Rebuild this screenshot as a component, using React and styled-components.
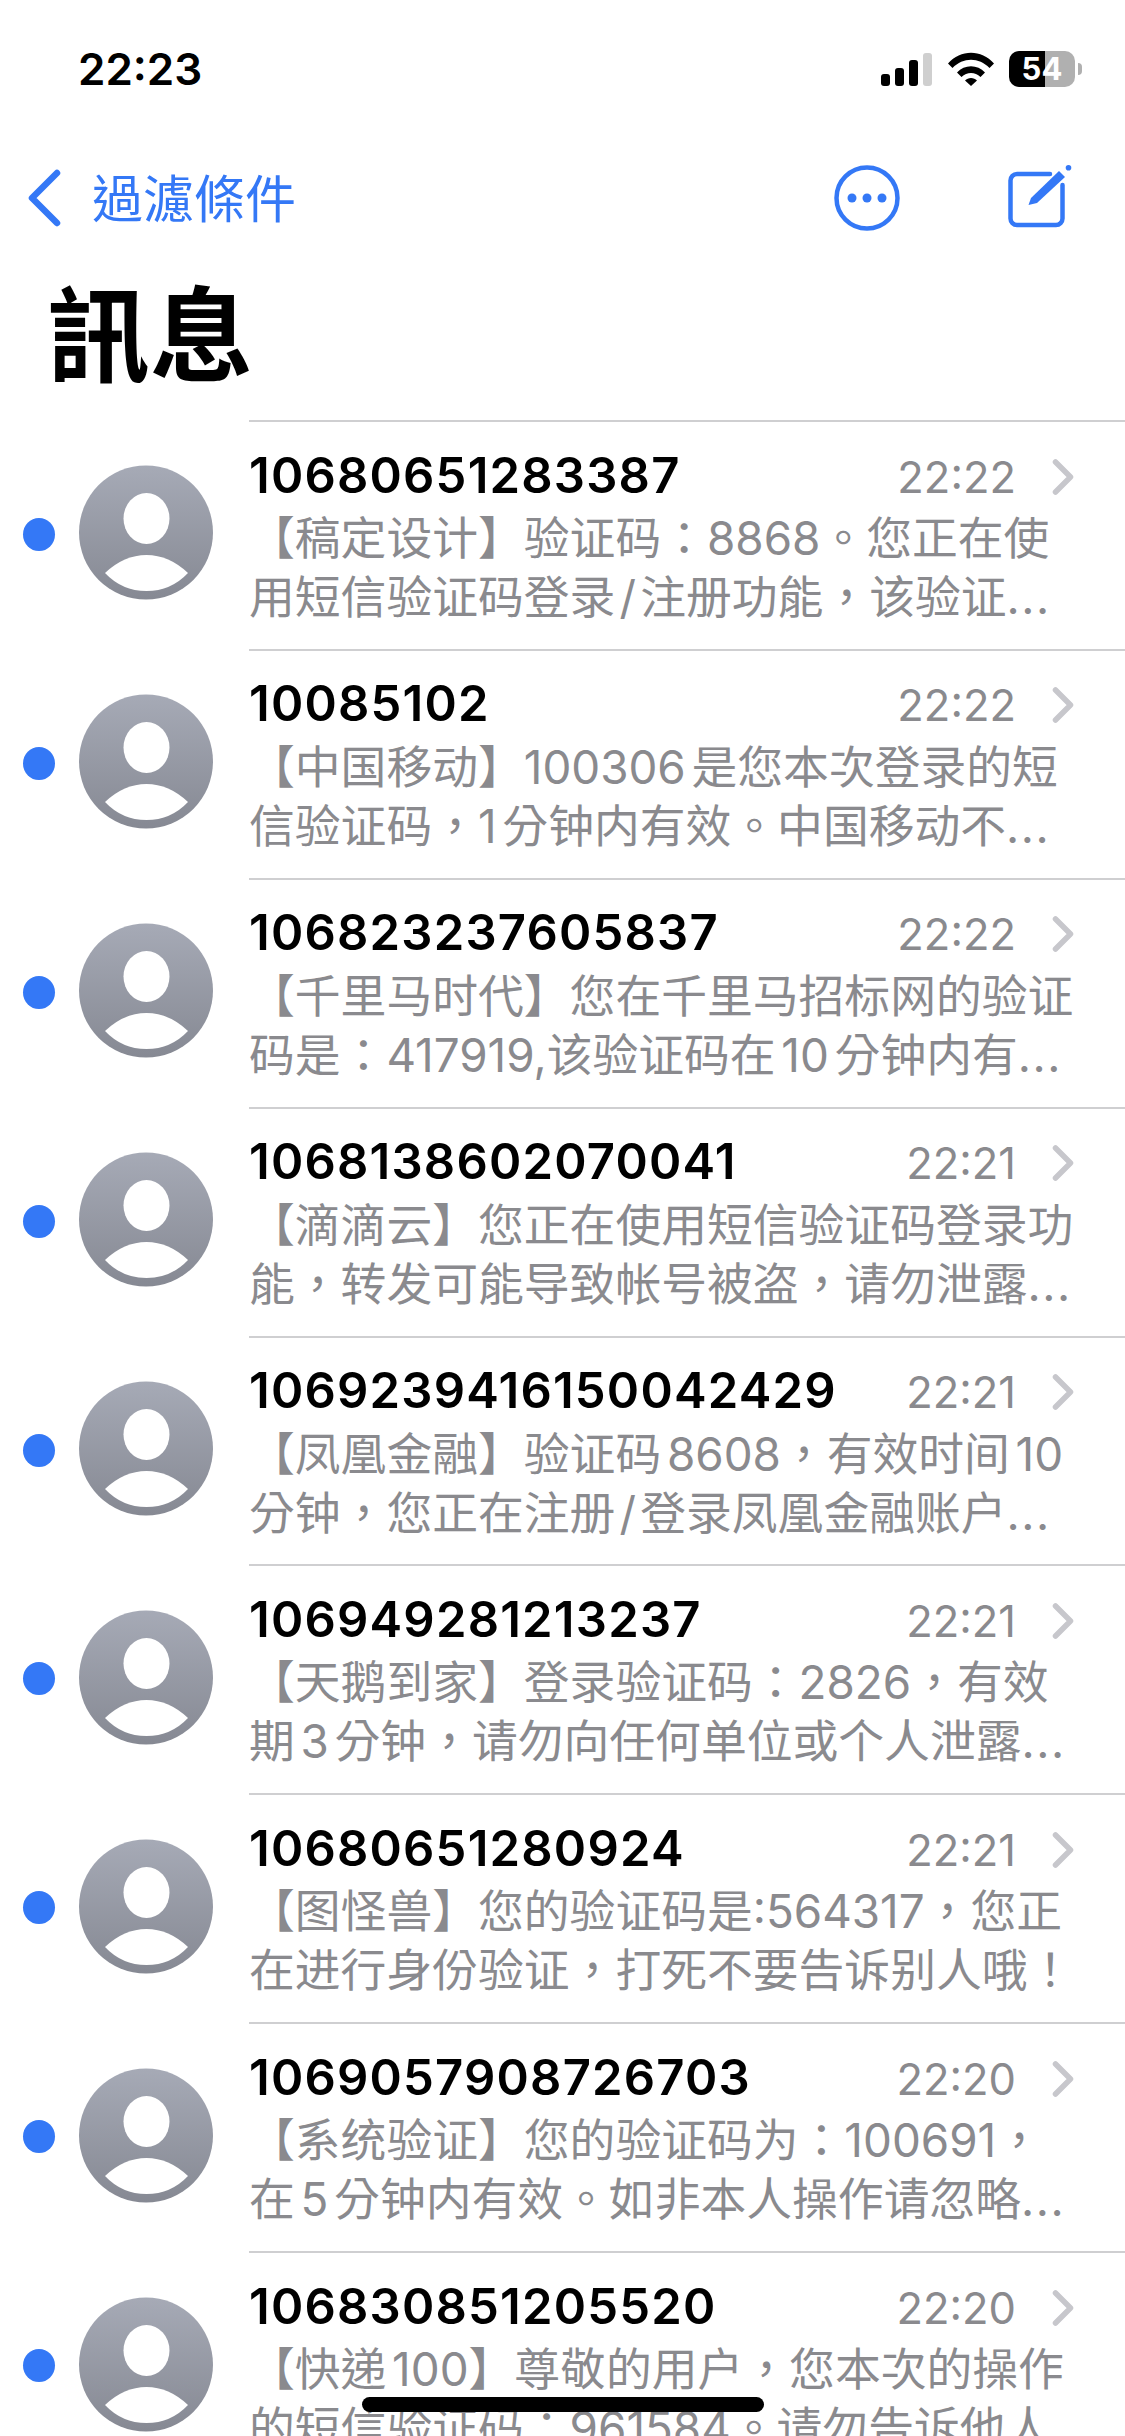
import React from "react";
import styled, { createGlobalStyle } from "styled-components";

const GlobalStyle = createGlobalStyle`
  html, body {
    margin: 0;
    padding: 0;
    background: #fff;
  }
`;

const Screen = styled.div`
  position: relative;
  width: 1125px;
  height: 2436px;
  overflow: hidden;
  background: #fff;
  font-family: Inter, "Noto Sans CJK TC", sans-serif;
`;

const StatusBar = styled.div`
  height: 138px;
  display: flex;
  align-items: center;
  justify-content: space-between;
  padding: 0 43px 0 78px;
`;

const Clock = styled.div`
  font-size: 44px;
  font-weight: 600;
  color: #000;
`;

const StatusIcons = styled.div`
  display: flex;
  align-items: center;
  gap: 15px;
`;

const Battery = styled.div`
  position: relative;
  width: 66px;
  height: 36px;
  border-radius: 10px;
  overflow: hidden;
  background: linear-gradient(90deg, #000 54%, #b0b0b0 54%);
  color: #fff;
  font-size: 31px;
  font-weight: 700;
  line-height: 36px;
  text-align: center;
`;

const BatteryWrap = styled.div`
  display: flex;
  align-items: center;
  gap: 3px;
`;

const BatteryNub = styled.div`
  width: 4px;
  height: 12px;
  background: #b0b0b0;
  border-radius: 0 4px 4px 0;
`;

const NavBar = styled.div`
  height: 120px;
  display: flex;
  align-items: center;
  justify-content: space-between;
  padding: 0 52.5px 0 27px;
`;

const BackLink = styled.div`
  display: flex;
  align-items: center;
  gap: 30px;
  color: #3478f6;
  font-family: "Noto Sans CJK TC", sans-serif;
  font-size: 51px;
`;

const BackLabel = styled.span`
  padding-bottom: 5px;
`;

const NavActions = styled.div`
  display: flex;
  align-items: center;
  gap: 106.5px;
`;

const PageTitle = styled.h1`
  margin: 0;
  height: 162px;
  padding: 0 0 0 47px;
  box-sizing: border-box;
  font-family: "Noto Sans CJK TC", sans-serif;
  font-size: 103px;
  font-weight: 700;
  line-height: 143px;
  color: #000;
`;

const Row = styled.div`
  height: 228.9px;
  display: flex;
`;

const Lead = styled.div`
  width: 249px;
  flex: none;
  display: flex;
  align-items: center;
  padding: 0 0 0 23px;
  box-sizing: border-box;
  gap: 24px;
`;

const UnreadDot = styled.div`
  width: 32px;
  height: 33px;
  border-radius: 50%;
  background: #3478f6;
  flex: none;
`;

const AvatarSvg = styled.svg`
  margin-bottom: 3px;
  flex: none;
`;

const Body = styled.div`
  flex: 1;
  min-width: 0;
  border-top: 2px solid #cfcfd1;
  padding-top: 25px;
  box-sizing: border-box;
`;

const Header = styled.div`
  height: 56px;
  display: flex;
  align-items: center;
  justify-content: space-between;
  padding-right: 51px;
`;

const Sender = styled.div`
  font-size: 49px;
  font-weight: 600;
  color: #000;
  letter-spacing: 1.2px;
`;

const Meta = styled.div`
  display: flex;
  align-items: center;
  gap: 36px;
  margin-top: 3px;
  color: #8a8a8e;
  font-size: 43.5px;
`;

const Preview = styled.div`
  margin-top: 6px;
  color: #8a8a8e;
  font-family: Inter, "Noto Sans CJK TC", sans-serif;
  font-size: 45.8px;
  line-height: 59px;
`;

const PreviewLine = styled.div`
  white-space: nowrap;
  text-autospace: normal;
`;

const Ellipsis = styled.span`
  letter-spacing: 1.5px;
`;

const HomeIndicator = styled.div`
  position: absolute;
  left: 362px;
  bottom: 24px;
  width: 402px;
  height: 15px;
  border-radius: 8px;
  background: #000;
`;

const messages = [
  { sender: "10680651283387", time: "22:22", first: "【稿定设计】验证码：8868。您正在使", second: "用短信验证码登录\u200a/\u200a注册功能，该验证", clipped: true },
  { sender: "10085102", time: "22:22", first: "【中国移动】100306是您本次登录的短", second: "信验证码，1分钟内有效。中国移动不", clipped: true },
  { sender: "106823237605837", time: "22:22", first: "【千里马时代】您在千里马招标网的验证", second: "码是：417919,该验证码在10分钟内有", clipped: true },
  { sender: "1068138602070041", time: "22:21", first: "【滴滴云】您正在使用短信验证码登录功", second: "能，转发可能导致帐号被盗，请勿泄露", clipped: true },
  { sender: "1069239416150042429", time: "22:21", first: "【凤凰金融】验证码8608，有效时间10", second: "分钟，您正在注册\u200a/\u200a登录凤凰金融账户", clipped: true },
  { sender: "106949281213237", time: "22:21", first: "【天鹅到家】登录验证码：2826，有效", second: "期3分钟，请勿向任何单位或个人泄露", clipped: true },
  { sender: "10680651280924", time: "22:21", first: "【图怪兽】您的验证码是:564317，您正", second: "在进行身份验证，打死不要告诉别人哦！" },
  { sender: "1069057908726703", time: "22:20", first: "【系统验证】您的验证码为：100691，", second: "在5分钟内有效。如非本人操作请忽略", clipped: true },
  { sender: "106830851205520", time: "22:20", first: "【快递100】尊敬的用户，您本次的操作", second: "的短信验证码：961584。请勿告诉他人" },
];

const SignalIcon = () => (
  <svg width="52" height="33" viewBox="0 0 52 33">
    <rect x="0" y="21" width="9" height="12" rx="3" fill="#000" />
    <rect x="14" y="15" width="9" height="18" rx="3" fill="#000" />
    <rect x="28" y="7" width="9" height="26" rx="3" fill="#000" />
    <rect x="42" y="0" width="9" height="33" rx="3" fill="#cfcfcf" />
  </svg>
);

const WifiIcon = () => (
  <svg width="46" height="34" viewBox="0 0 46 34">
    <path d="M0 11.5C12.5 -3 33.5 -3 46 11.5L41.5 16C31 5 15 5 4.500 16Z" fill="#000" />
    <path d="M9 20.500C16.500 12 29.500 12 37 20.500L32.500 25C27 19.500 19 19.500 13.500 25Z" fill="#000" />
    <path d="M17 28.500C20 25 26 25 29 28.500L23 34Z" fill="#000" />
  </svg>
);

const BackIcon = () => (
  <svg width="35" height="58" viewBox="0 0 35 58">
    <path d="M30 4L5 29L30 54" fill="none" stroke="#3478f6" strokeWidth="6.500" strokeLinecap="round" strokeLinejoin="round" />
  </svg>
);

const MoreIcon = () => (
  <svg width="66" height="66" viewBox="0 0 66 66">
    <circle cx="33" cy="33" r="30.500" fill="none" stroke="#3478f6" strokeWidth="4.500" />
    <circle cx="18" cy="33" r="4.500" fill="#3478f6" />
    <circle cx="33" cy="33" r="4.500" fill="#3478f6" />
    <circle cx="48" cy="33" r="4.500" fill="#3478f6" />
  </svg>
);

const ComposeIcon = () => (
  <svg width="66" height="66" viewBox="0 0 66 66">
    <path d="M43 9H10A6.500 6.500 0 0 0 3.500 15.500V53.500A6.500 6.500 0 0 0 10 60H49A6.500 6.500 0 0 0 55.500 53.500V20" fill="none" stroke="#3478f6" strokeWidth="4.500" strokeLinecap="round" />
    <path d="M21.500 40L24 33L52 6L58 12L30 38Z" fill="#3478f6" />
    <circle cx="61.500" cy="2.800" r="2.800" fill="#3478f6" />
  </svg>
);

const ChevronIcon = () => (
  <svg width="22" height="36" viewBox="0 0 22 36">
    <path d="M3.500 3L18.500 18L3.500 33" fill="none" stroke="#c7c7cc" strokeWidth="5.500" strokeLinecap="round" strokeLinejoin="round" />
  </svg>
);

const AvatarIcon = () => (
  <AvatarSvg width="134" height="135" viewBox="0 0 134 135">
    <defs>
      <linearGradient id="avatarFill" x1="0" y1="0" x2="0" y2="1">
        <stop offset="0" stopColor="#a6aab6" />
        <stop offset="1" stopColor="#868993" />
      </linearGradient>
    </defs>
    <circle cx="67" cy="67.500" r="67" fill="url(#avatarFill)" />
    <ellipse cx="67.500" cy="53.500" rx="23" ry="25.500" fill="#fff" />
    <path d="M26 108Q45 90 67.500 90Q90 90 109 108Q92 126 67.500 126Q43 126 26 108Z" fill="#fff" />
  </AvatarSvg>
);

const App = () => (
  <Screen>
    <GlobalStyle />
    <StatusBar>
      <Clock>22:23</Clock>
      <StatusIcons>
        <SignalIcon />
        <WifiIcon />
        <BatteryWrap>
          <Battery>54</Battery>
          <BatteryNub />
        </BatteryWrap>
      </StatusIcons>
    </StatusBar>
    <NavBar>
      <BackLink>
        <BackIcon />
        <BackLabel>過濾條件</BackLabel>
      </BackLink>
      <NavActions>
        <MoreIcon />
        <ComposeIcon />
      </NavActions>
    </NavBar>
    <PageTitle>訊息</PageTitle>
    {messages.map(({ sender, time, first, second, clipped }) => (
      <Row key={sender}>
        <Lead>
          <UnreadDot />
          <AvatarIcon />
        </Lead>
        <Body>
          <Header>
            <Sender>{sender}</Sender>
            <Meta>
              {time}
              <ChevronIcon />
            </Meta>
          </Header>
          <Preview>
            <PreviewLine>{first}</PreviewLine>
            <PreviewLine>
              {second}
              {clipped && <Ellipsis>...</Ellipsis>}
            </PreviewLine>
          </Preview>
        </Body>
      </Row>
    ))}
    <HomeIndicator />
  </Screen>
);

export default App;
